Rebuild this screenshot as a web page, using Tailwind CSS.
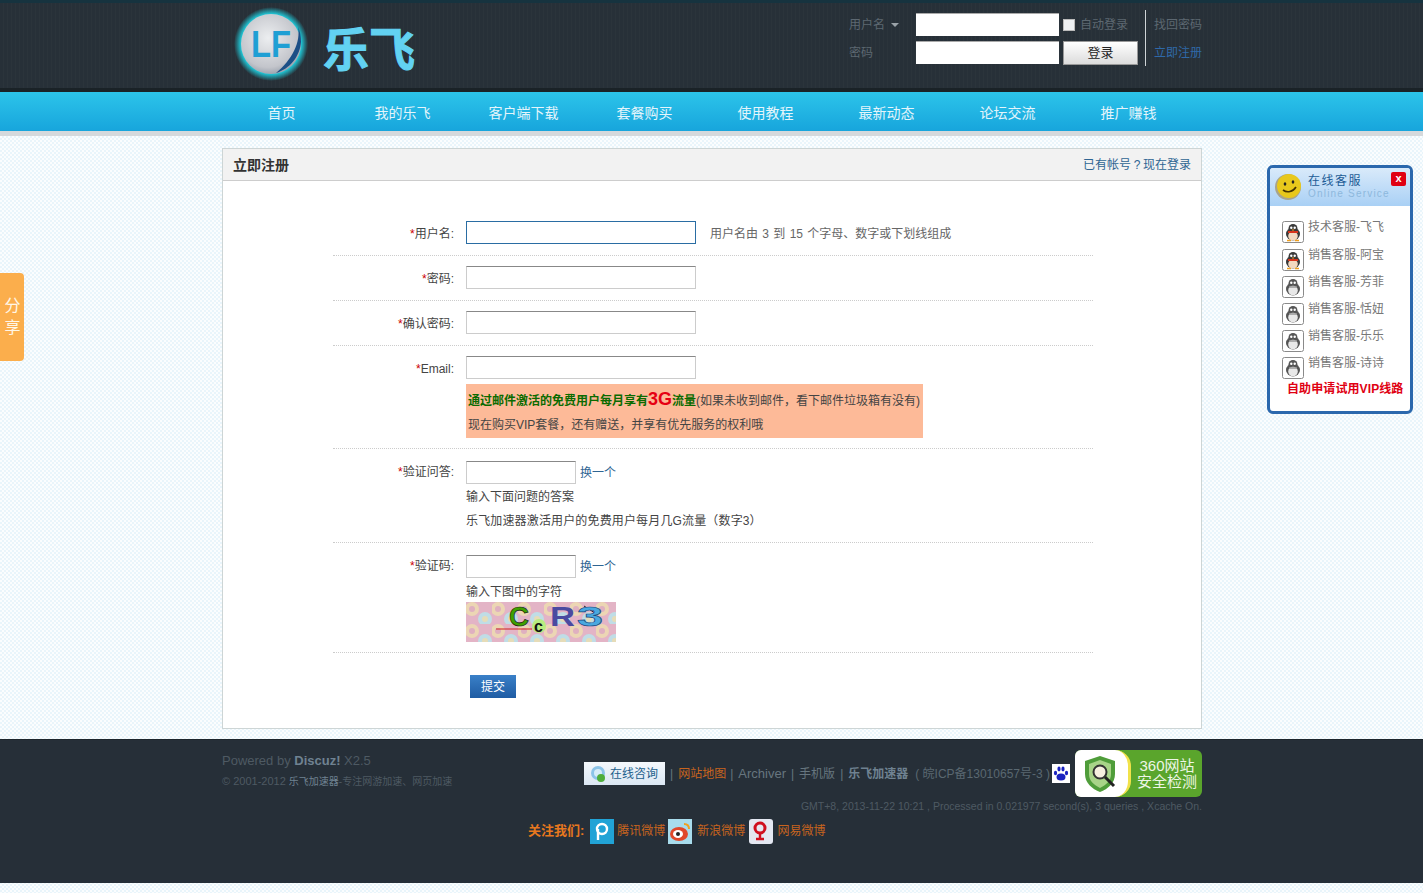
<!DOCTYPE html>
<html lang="en">
<head>
    <meta charset="UTF-8">
    <title>立即注册 - 乐飞加速器</title>
    <script src="https://cdn.jsdelivr.net/npm/@tailwindcss/browser@4"></script>
</head>
<body class="relative h-[893px] overflow-hidden text-[12px] text-[#444] font-['Liberation_Sans','Noto_Sans_CJK_SC',sans-serif] bg-[repeating-conic-gradient(#e9f5fb_0_25%,#fbfdfe_0_50%)] bg-[length:4px_4px]">

    <!-- shared icons -->
    <svg class="hidden">
        <linearGradient id="tile" x1="0" y1="0" x2="0" y2="1">
            <stop offset="0" stop-color="#fafafa"/>
            <stop offset="1" stop-color="#bdbdbd"/>
        </linearGradient>
        <symbol id="penguin" viewBox="0 0 22 22">
            <rect x="0.5" y="0.5" width="21" height="21" rx="2" fill="url(#tile)" stroke="#8a8a8a"/>
            <ellipse cx="11" cy="13" rx="7" ry="6.5" fill="#555"/>
            <circle cx="11" cy="7.5" r="4.5" fill="#555"/>
            <ellipse cx="11" cy="14.5" rx="4.8" ry="4.8" fill="#e8e8e8"/>
            <circle cx="9.3" cy="6.8" r="1.2" fill="#fff"/>
            <circle cx="12.7" cy="6.8" r="1.2" fill="#fff"/>
            <path d="M7 11h8" stroke="#999" stroke-width="1.6"/>
        </symbol>
        <symbol id="penguin-on" viewBox="0 0 22 22">
            <rect x="0.5" y="0.5" width="21" height="21" rx="2" fill="url(#tile)" stroke="#8a8a8a"/>
            <ellipse cx="11" cy="13" rx="7" ry="6.5" fill="#3a3a3a"/>
            <circle cx="11" cy="7.5" r="4.5" fill="#3a3a3a"/>
            <ellipse cx="11" cy="15" rx="4.8" ry="4.6" fill="#f3d9c0"/>
            <circle cx="9.3" cy="6.8" r="1.2" fill="#fff"/>
            <circle cx="12.7" cy="6.8" r="1.2" fill="#fff"/>
            <path d="M9.5 8.6h3l-1.5 1.4z" fill="#f0a020"/>
            <path d="M6 11h10" stroke="#d8341c" stroke-width="2"/>
            <path d="M5 19.5h4M13 19.5h4" stroke="#f0a020" stroke-width="1.6"/>
        </symbol>
    </svg>

    <!-- header -->
    <header class="h-[92px] bg-[repeating-linear-gradient(90deg,#273038_0_3px,#2b343b_3px_4px)] border-t-[3px] border-[#16333f] border-b-[4px] border-b-[#1a2227]">
        <div class="w-[980px] ml-[222px] flex">
            <div class="w-[627px] h-[85px] relative">
                <svg width="90" height="84" viewBox="0 0 90 84" class="ml-[10px] -mt-[1px]">
                    <defs>
                        <radialGradient id="ball" cx="45%" cy="40%" r="65%">
                            <stop offset="0" stop-color="#eceef0"/>
                            <stop offset="0.75" stop-color="#c3c5cb"/>
                            <stop offset="1" stop-color="#8f98a5"/>
                        </radialGradient>
                        <radialGradient id="glow">
                            <stop offset="0.8" stop-color="#1fd0e0"/>
                            <stop offset="1" stop-color="#1fd0e0" stop-opacity="0"/>
                        </radialGradient>
                    </defs>
                    <circle cx="39" cy="42" r="37" fill="url(#glow)"/>
                    <circle cx="39" cy="42" r="30" fill="url(#ball)"/>
                    <path d="M66 25C69 40 60 58 44 71 58 67 68 54 69 40c0-6-1-11-3-15z" fill="#1c4f86"/>
                    <text x="19" y="55" font-size="36" font-weight="700" textLength="40" lengthAdjust="spacingAndGlyphs" fill="#1f9fd4" font-family="Liberation Sans">LF</text>
                </svg>
                <span class="absolute left-[101px] top-[13px] text-[46px] leading-[60px] font-bold text-[#62d2f2] [-webkit-text-stroke:1px_#62d2f2] font-['Noto_Sans_CJK_SC',sans-serif]">乐飞</span>
            </div>
            <div class="flex text-[#5d6871]">
                <div class="w-[67px] pt-[11px]">
                    <div class="h-[28px] leading-[22px]">用户名 <span class="inline-block ml-[3px] mb-[2px] border-x-4 border-t-4 border-x-transparent border-t-[#9aa2a8]"></span></div>
                    <div class="leading-[22px]">密码</div>
                </div>
                <div class="pt-[10px] flex flex-col gap-[5px]">
                    <input class="w-[143px] h-[23px] bg-white border-t border-[#aaa]">
                    <input class="w-[143px] h-[23px] bg-white border-t border-[#aaa]">
                </div>
                <div class="w-[86px] pl-[4px] pt-[10px]">
                    <div class="h-[28px] flex items-center gap-[5px] pb-[4px]">
                        <span class="w-[12px] h-[12px] bg-[#eef1f4] border border-[#bbb]"></span>
                        <span>自动登录</span>
                    </div>
                    <button class="w-[75px] h-[24px] bg-gradient-to-b from-white to-[#dcdcdc] border border-[#999] text-[#222] text-[13px]">登录</button>
                </div>
                <div class="w-px h-[56px] mt-[7px] bg-[#cfd4d7]"></div>
                <div class="pl-[8px] pt-[11px]">
                    <div class="h-[28px] leading-[22px]">找回密码</div>
                    <div class="leading-[22px] text-[#2f69a8]">立即注册</div>
                </div>
            </div>
        </div>
    </header>

    <!-- nav -->
    <nav class="h-[39px] bg-gradient-to-b from-[#2cc4ea] to-[#17a5dc]">
        <div class="w-[980px] ml-[221px] flex leading-[43px] text-[14px] text-[#e4f5fb] text-center">
            <a class="w-[121px]">首页</a>
            <a class="w-[121px]">我的乐飞</a>
            <a class="w-[121px]">客户端下载</a>
            <a class="w-[121px]">套餐购买</a>
            <a class="w-[121px]">使用教程</a>
            <a class="w-[121px]">最新动态</a>
            <a class="w-[121px]">论坛交流</a>
            <a class="w-[121px]">推广赚钱</a>
        </div>
    </nav>
    <div class="h-[5px] bg-[#d5d9dc]"></div>

    <!-- register card -->
    <main class="w-[980px] h-[581px] ml-[222px] mt-[12px] bg-white border border-[#cdd5d5]">
        <div class="h-[32px] flex items-center justify-between px-[10px] bg-[#f2f2f2] border-b border-[#cdcdcd]">
            <h1 class="pt-px text-[14px] font-bold text-[#333]">立即注册</h1>
            <a class="text-[#2f6593]">已有帐号<span class="inline-block w-[12px] text-center">?</span>现在登录</a>
        </div>

        <form class="w-[760px] ml-[110px] pt-[30px]">
            <div class="flex pt-[10px] pb-[11px] border-b border-dotted border-[#ccc]">
                <label class="w-[121px] h-[21px] mt-[2px] mr-[12px] text-right leading-[23px]"><span class="text-[#c00]">*</span>用户名:</label>
                <input class="w-[230px] h-[23px] bg-white border border-[#2a6da3]">
                <span class="ml-[14px] h-[21px] mt-[2px] leading-[23px] text-[#666] [word-spacing:1px]">用户名由 3 到 15 个字母、数字或下划线组成</span>
            </div>
            <div class="flex pt-[10px] pb-[11px] border-b border-dotted border-[#ccc]">
                <label class="w-[121px] h-[21px] mt-[2px] mr-[12px] text-right leading-[23px]"><span class="text-[#c00]">*</span>密码:</label>
                <input class="w-[230px] h-[23px] bg-white border border-[#ccc] border-t-[#888]">
            </div>
            <div class="flex pt-[10px] pb-[11px] border-b border-dotted border-[#ccc]">
                <label class="w-[121px] h-[21px] mt-[2px] mr-[12px] text-right leading-[23px]"><span class="text-[#c00]">*</span>确认密码:</label>
                <input class="w-[230px] h-[23px] bg-white border border-[#ccc] border-t-[#888]">
            </div>
            <div class="flex pt-[10px] pb-[10px] border-b border-dotted border-[#ccc]">
                <label class="w-[121px] h-[21px] mt-[2px] mr-[12px] text-right leading-[23px]"><span class="text-[#c00]">*</span>Email:</label>
                <div>
                    <input class="block w-[230px] h-[23px] bg-white border border-[#ccc] border-t-[#888]">
                    <div class="w-[457px] h-[54px] mt-[5px] pl-[2px] bg-[#fdba98]">
                        <p class="h-[29px] leading-[30px] whitespace-nowrap"><b class="text-[#0a6b00]">通过邮件激活的免费用户每月享有</b><b class="text-[18px] text-[#e60012]">3G</b><b class="text-[#0a6b00]">流量</b>(如果未收到邮件，看下邮件垃圾箱有没有)</p>
                        <p class="leading-[25px]">现在购买VIP套餐，还有赠送，并享有优先服务的权利哦</p>
                    </div>
                </div>
            </div>
            <div class="flex pt-[12px] pb-[9px] border-b border-dotted border-[#ccc]">
                <label class="w-[121px] mr-[12px] text-right leading-[22px]"><span class="text-[#c00]">*</span>验证问答:</label>
                <div>
                    <div class="flex items-center h-[23px]">
                        <input class="w-[110px] h-[23px] bg-white border border-[#ccc] border-t-[#888]">
                        <a class="ml-[4px] text-[#2f6593]">换一个</a>
                    </div>
                    <p class="leading-[24px] mt-[1px]">输入下面问题的答案</p>
                    <p class="leading-[24px] tracking-[0.15px]">乐飞加速器激活用户的免费用户每月几G流量（数字3）</p>
                </div>
            </div>
            <div class="flex pt-[12px] pb-[10px] border-b border-dotted border-[#ccc]">
                <label class="w-[121px] mr-[12px] text-right leading-[22px]"><span class="text-[#c00]">*</span>验证码:</label>
                <div>
                    <div class="flex items-center h-[23px]">
                        <input class="w-[110px] h-[23px] bg-white border border-[#ccc] border-t-[#888]">
                        <a class="ml-[4px] text-[#2f6593]">换一个</a>
                    </div>
                    <p class="h-[24px] leading-[28px]">输入下图中的字符</p>
                    <svg width="150" height="40" viewBox="0 0 150 40" class="block">
                        <defs>
                            <pattern id="dots" width="26" height="22" patternUnits="userSpaceOnUse">
                                <rect width="26" height="22" fill="#e3b4c6"/>
                                <circle cx="6" cy="7" r="7" fill="#ecd6b4"/>
                                <circle cx="19" cy="17" r="7" fill="#c0dde6"/>
                                <circle cx="6" cy="7" r="3" fill="#dfb0c0"/>
                                <circle cx="19" cy="17" r="3" fill="#e6dcb8"/>
                            </pattern>
                        </defs>
                        <rect width="150" height="40" fill="url(#dots)"/>
                        <path d="M30 27h36" stroke="#d02020"/>
                        <path d="M118 4l14 9" stroke="#222"/>
                        <circle cx="73" cy="24" r="7" fill="#b8ec80"/>
                        <text x="43" y="24" font-size="27" font-weight="700" textLength="20" lengthAdjust="spacingAndGlyphs" fill="#3fa000" stroke="#111" stroke-width="0.6" font-family="Liberation Sans">C</text>
                        <text x="68" y="30" font-size="16" font-weight="700" fill="#111" font-family="Liberation Sans">c</text>
                        <text x="84" y="24" font-size="28" font-weight="700" textLength="25" lengthAdjust="spacingAndGlyphs" fill="#4a4aa0" font-family="Liberation Sans">R</text>
                        <text x="111" y="24" font-size="28" font-weight="700" textLength="26" lengthAdjust="spacingAndGlyphs" fill="#4aa8e0" stroke="#1a4a80" stroke-width="0.6" font-family="Liberation Sans">3</text>
                    </svg>
                </div>
            </div>
            <button type="button" class="block ml-[137px] mt-[22px] w-[46px] h-[23px] bg-gradient-to-b from-[#3a80c8] to-[#1f5ca3] text-white text-[12px]">提交</button>
        </form>
    </main>

    <!-- footer -->
    <footer class="mt-[10px] h-[144px] bg-[#262f38] border-t border-[#1d252c]">
        <div class="w-[980px] ml-[222px]">
            <div class="flex justify-between pt-[10px]">
                <div class="pt-[1px] text-[#4e5a63]">
                    <p class="leading-[20px] text-[13px]">Powered by <b class="text-[#6f8291]">Discuz!</b> X2.5</p>
                    <p class="leading-[20px] text-[11px] whitespace-nowrap">© 2001-2012 <span class="text-[10px] text-[#6f8291]">乐飞加速器</span><span class="text-[10px]">-专注网游加速、网页加速</span></p>
                </div>
                <div class="flex items-center text-[#67767f]">
                    <span class="flex items-center gap-[3px] w-[81px] h-[23px] mr-[5px] pl-[5px] bg-gradient-to-b from-[#f4f8fc] to-[#dbe7f3] text-[12px] text-[#1c5f8c]">
                        <svg width="18" height="18" viewBox="0 0 18 18">
                            <circle cx="9" cy="8" r="7" fill="#8cc4e8"/>
                            <circle cx="9" cy="8" r="4" fill="#d6ecf8"/>
                            <circle cx="12" cy="13" r="4" fill="#4fae3c"/>
                        </svg>
                        在线咨询
                    </span>
                    <span>|</span>
                    <a class="ml-[5px] mr-[4px] text-[#c8641e]">网站地图</a>
                    <span>|</span>
                    <a class="ml-[5px] mr-[5px] text-[13px]">Archiver</a>
                    <span>|</span>
                    <a class="ml-[5px] mr-[5px]">手机版</a>
                    <span>|</span>
                    <b class="ml-[5px] text-[#6f8291]">乐飞加速器</b>
                    <span class="ml-[7px] text-[#5a6871]">( 皖ICP备13010657号-3 )</span>
                    <svg width="18" height="19" viewBox="0 0 18 19" class="ml-[2px] mr-[5px]">
                        <rect width="18" height="19" fill="#fff"/>
                        <ellipse cx="9" cy="13" rx="4.5" ry="3.5" fill="#1a22c0"/>
                        <ellipse cx="3.5" cy="9" rx="1.6" ry="2.2" fill="#1a22c0"/>
                        <ellipse cx="7" cy="5" rx="1.6" ry="2.4" fill="#1a22c0"/>
                        <ellipse cx="11" cy="5" rx="1.6" ry="2.4" fill="#1a22c0"/>
                        <ellipse cx="14.5" cy="9" rx="1.6" ry="2.2" fill="#1a22c0"/>
                    </svg>
                    <div class="flex w-[127px] h-[47px] rounded-[6px] overflow-hidden bg-[#5aa52c]">
                        <div class="w-[56px] h-full flex items-center justify-center bg-white rounded-r-[16px] border-r-[3px] border-[#f1e24a]">
                            <svg width="40" height="38" viewBox="0 0 40 38">
                                <path d="M18 1l15 5v13c0 9-7 15-15 18C10 34 3 28 3 19V6z" fill="#4f9d3a"/>
                                <path d="M18 5l11 4v10c0 7-5 11-11 14-6-3-11-7-11-14V9z" fill="#a8d488"/>
                                <circle cx="18" cy="17" r="6.5" fill="#f7efe0" stroke="#333" stroke-width="2"/>
                                <path d="M23 22l9 9" stroke="#222" stroke-width="3"/>
                            </svg>
                        </div>
                        <div class="flex-1 pt-[8px] pl-px text-center text-[15px] leading-[16px] text-[#eef6e6] whitespace-nowrap">360网站<br>安全检测</div>
                    </div>
                </div>
            </div>
            <p class="mt-[1px] text-right text-[10.5px] leading-[16px] text-[#4e5a63] whitespace-nowrap">GMT+8, 2013-11-22 10:21 , Processed in 0.021977 second(s), 3 queries , Xcache On.</p>
            <div class="flex items-center ml-[306px] mt-[4px] h-[26px] text-[#c8641e]">
                <b class="text-[#e8781e] text-[13px]">关注我们:</b>
                <svg width="24" height="25" viewBox="0 0 24 25" class="ml-[6px] mr-[3px]">
                    <rect width="24" height="25" fill="#21a3d6"/>
                    <circle cx="12" cy="10" r="5" fill="none" stroke="#fff" stroke-width="2.4"/>
                    <path d="M8 10v11" stroke="#fff" stroke-width="2.4"/>
                </svg>
                <a>腾讯微博</a>
                <svg width="24" height="25" viewBox="0 0 24 25" class="ml-[3px] mr-[5px]">
                    <rect width="24" height="25" fill="#a8dcec"/>
                    <ellipse cx="11" cy="15" rx="9" ry="7" fill="#e0482a"/>
                    <ellipse cx="10" cy="15" rx="5" ry="4" fill="#fff"/>
                    <circle cx="10" cy="15" r="2" fill="#222"/>
                    <path d="M16 5c3 0 5 2 5 5" fill="none" stroke="#f1a020" stroke-width="2"/>
                </svg>
                <a>新浪微博</a>
                <svg width="24" height="25" viewBox="0 0 24 25" class="ml-[4px] mr-[4px]">
                    <rect width="24" height="25" rx="3" fill="#e4e8f2"/>
                    <circle cx="11" cy="9" r="5" fill="none" stroke="#d01020" stroke-width="3"/>
                    <path d="M11 14v7M7 20h8" stroke="#d01020" stroke-width="2.4"/>
                </svg>
                <a>网易微博</a>
            </div>
        </div>
    </footer>

    <!-- share tab -->
    <div class="absolute left-0 top-[273px] w-[24px] h-[88px] pt-[22px] pl-px rounded-r-[4px] bg-[#fbae4c] text-center text-[16px] leading-[22px] text-[#fff6e6]">分<br>享</div>

    <!-- online service -->
    <aside class="absolute left-[1267px] top-[165px] w-[146px] h-[249px] bg-white border-[3px] border-[#2b68ad] rounded-[6px] overflow-hidden">
        <div class="relative h-[38px] flex items-center gap-[6px] pl-[4px] bg-gradient-to-b from-[#d9eafa] to-[#a9d0f5]">
            <svg width="28" height="28" viewBox="0 0 28 28">
                <circle cx="14" cy="14" r="13" fill="#a8a48c"/>
                <circle cx="15" cy="13" r="12" fill="#e8c81c"/>
                <ellipse cx="11" cy="11" rx="1.3" ry="1.8" fill="#222"/>
                <ellipse cx="19" cy="9" rx="1.3" ry="1.8" fill="#222"/>
                <path d="M9 17c4 3 10 2 13-3" fill="none" stroke="#443300" stroke-width="1.6"/>
            </svg>
            <div>
                <p class="text-[12px] leading-[14px] tracking-[1.5px] text-[#1d5c96]">在线客服</p>
                <p class="text-[10px] leading-[12px] tracking-[1.2px] text-[#8db8dd]">Online Service</p>
            </div>
            <span class="absolute right-[4px] top-[4px] w-[15px] h-[14px] rounded-[2px] bg-[#e00012] text-white text-[11px] leading-[13px] font-bold text-center">x</span>
        </div>
        <ul class="pt-[12px] pl-[12px] text-[#777]">
            <li class="h-[28px] flex gap-[4px]"><svg width="22" height="22" class="mt-[3px]"><use href="#penguin-on"/></svg><span class="leading-[18px]">技术客服-飞飞</span></li>
            <li class="h-[27px] flex gap-[4px]"><svg width="22" height="22" class="mt-[3px]"><use href="#penguin-on"/></svg><span class="leading-[18px]">销售客服-阿宝</span></li>
            <li class="h-[27px] flex gap-[4px]"><svg width="22" height="22" class="mt-[3px]"><use href="#penguin"/></svg><span class="leading-[18px]">销售客服-芳菲</span></li>
            <li class="h-[27px] flex gap-[4px]"><svg width="22" height="22" class="mt-[3px]"><use href="#penguin"/></svg><span class="leading-[18px]">销售客服-恬妞</span></li>
            <li class="h-[27px] flex gap-[4px]"><svg width="22" height="22" class="mt-[3px]"><use href="#penguin"/></svg><span class="leading-[18px]">销售客服-乐乐</span></li>
            <li class="h-[27px] flex gap-[4px]"><svg width="22" height="22" class="mt-[3px]"><use href="#penguin"/></svg><span class="leading-[18px]">销售客服-诗诗</span></li>
        </ul>
        <p class="pl-[17px] -mt-[1px] text-[12px] tracking-[0.1px] font-bold text-[#e00012] whitespace-nowrap">自助申请试用VIP线路</p>
    </aside>
</body>
</html>
